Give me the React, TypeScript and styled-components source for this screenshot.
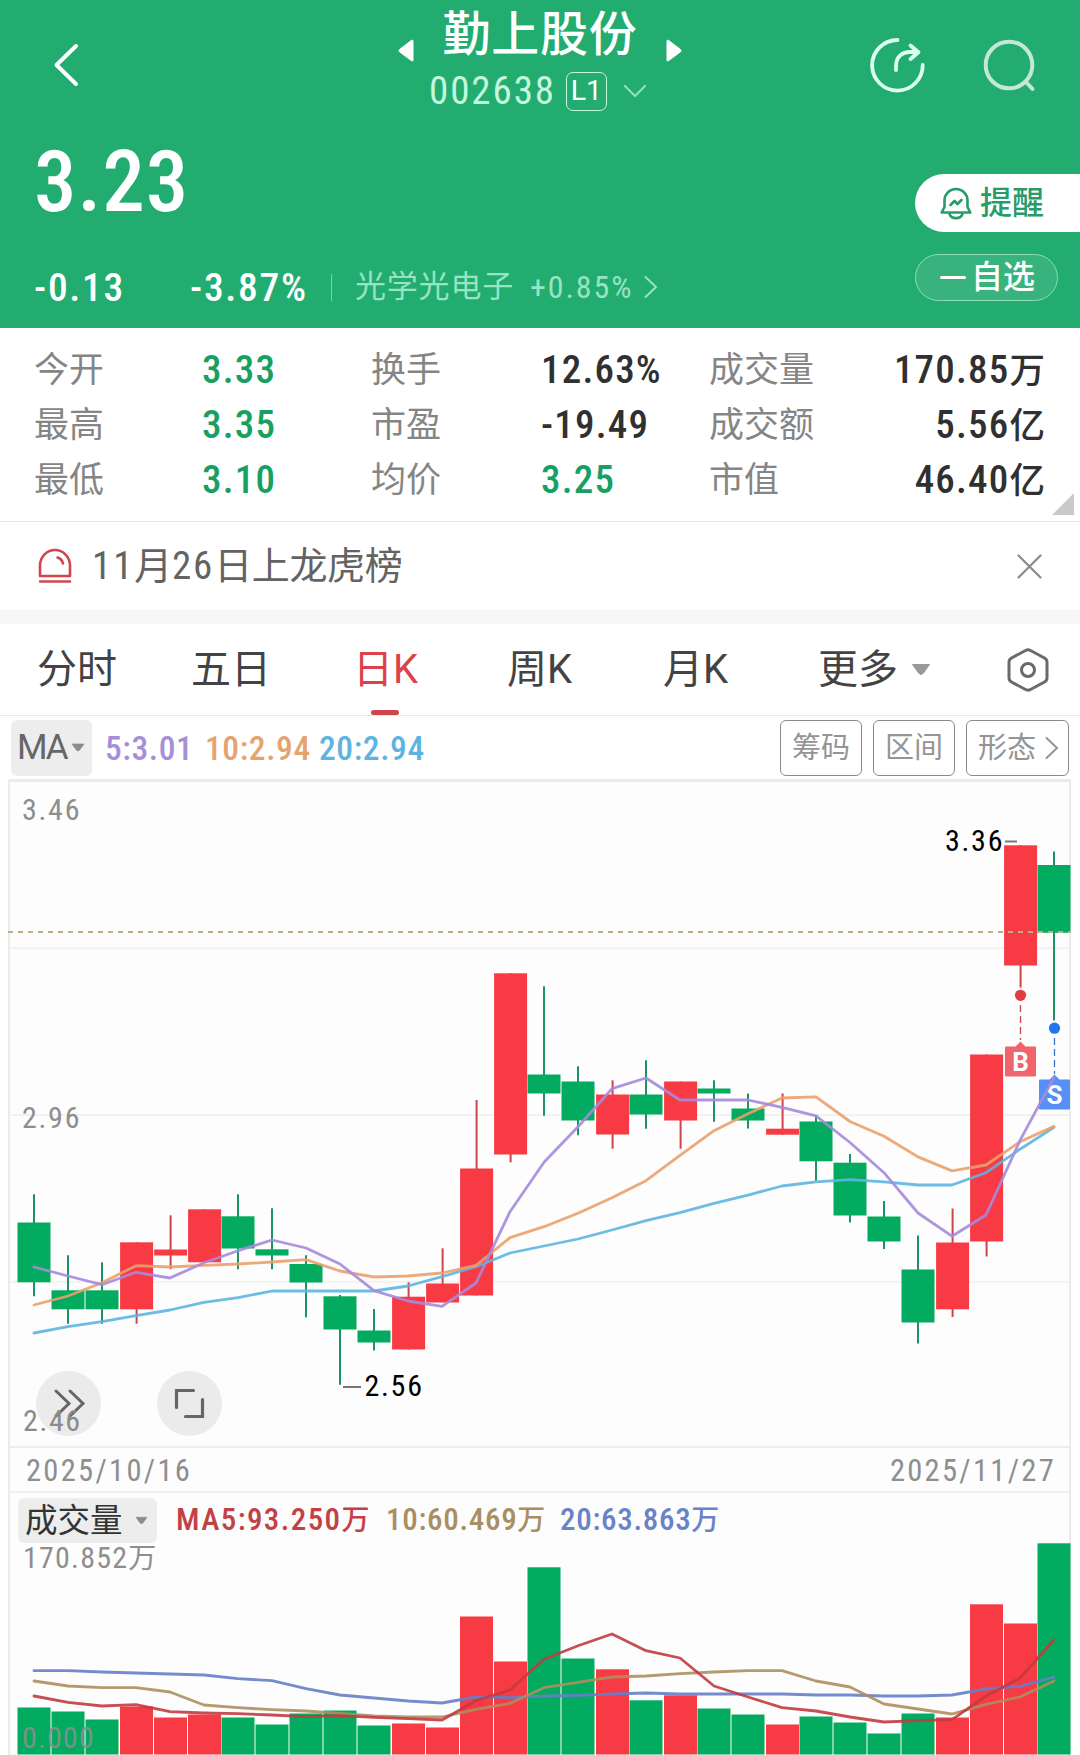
import React from 'react';
import styled, { createGlobalStyle } from 'styled-components';

const GlobalStyle = createGlobalStyle`
  * { box-sizing: border-box; }
  body {
    margin: 0;
    background: #fff;
    font-family: Roboto, "Noto Sans CJK SC", sans-serif;
  }
  svg { display: block; flex: none; overflow: visible; }
`;

const RED = '#f73a44';
const GREEN = '#02ab5f';

/* ---------- layout ---------- */

const Page = styled.main`
  width: 1080px;
  height: 1755px;
  overflow: hidden;
  background: #fff;
`;

const Header = styled.header`
  height: 328px;
  background: #22ac70;
  color: #fff;
`;

const TopBar = styled.div`
  display: grid;
  grid-template-columns: 1fr 284px 1fr;
  height: 130px;
`;

const BackSlot = styled.div`
  padding: 43px 0 0 53px;
`;

const TitleNav = styled.div`
  display: flex;
  justify-content: space-between;
`;

const StepArrow = styled.div`
  padding-top: 39px;
`;

const TitleStack = styled.div`
  display: flex;
  flex-direction: column;
  align-items: center;
`;

const Title = styled.h1`
  margin: 0;
  height: 68px;
  line-height: 70px;
  font-size: 48px;
  font-weight: 500;
  letter-spacing: 0.8px;
  white-space: nowrap;
`;

const CodeRow = styled.div`
  display: flex;
  align-items: center;
  height: 46px;
  margin-left: -5px;
`;

const Code = styled.span`
  font-size: 39px;
  font-stretch: 75%;
  letter-spacing: 1.9px;
  color: #c4f7de;
`;

const LevelBadge = styled.span`
  width: 41px;
  height: 39px;
  margin: 0 17px 0 10px;
  border: 1.5px solid #c4f7de;
  border-radius: 7px;
  font-size: 28.5px;
  line-height: 36px;
  text-align: center;
`;

const ActionIcons = styled.div`
  display: flex;
  justify-content: flex-end;
  gap: 58px;
  padding: 37px 45px 0 0;
`;

const QuoteArea = styled.div`
  display: flex;
  justify-content: space-between;
`;

const PriceColumn = styled.div`
  padding-left: 34px;
`;

const Price = styled.div`
  height: 103px;
  font-size: 85px;
  font-weight: 500;
  font-stretch: 75%;
  line-height: 105px;
  letter-spacing: 1px;
`;

const ChangeRow = styled.div`
  display: flex;
  align-items: center;
  height: 80px;
  margin-top: 14px;
`;

const Change = styled.span<{ $width: number }>`
  width: ${(p) => p.$width}px;
  font-size: 39.5px;
  font-weight: 500;
  font-stretch: 75%;
  letter-spacing: 1.7px;
  white-space: nowrap;
`;

const Divider = styled.span`
  width: 1px;
  height: 27px;
  background: #74d3a7;
`;

const Sector = styled.span`
  display: flex;
  align-items: center;
  margin-left: 23px;
  padding-bottom: 1px;
  font-size: 31px;
  line-height: 36px;
  letter-spacing: 0.8px;
  color: #98e3c1;
  white-space: nowrap;
`;

const SectorChange = styled.span`
  width: 105px;
  margin: 0 9px 0 16px;
  font-size: 32px;
  font-stretch: 75%;
  letter-spacing: 1.9px;
`;

const Pills = styled.div`
  display: flex;
  flex-direction: column;
  gap: 22px;
  width: 165px;
  padding-top: 44px;
`;

const AlertPill = styled.div`
  display: flex;
  align-items: center;
  gap: 8px;
  height: 58px;
  padding-left: 25px;
  border-radius: 29px 0 0 29px;
  background: #fff;
  color: #279b69;
  font-size: 32px;
  font-weight: 500;
  line-height: 52px;
`;

const WatchPill = styled.div`
  display: flex;
  align-items: center;
  gap: 5px;
  width: 143px;
  height: 47px;
  padding: 0 0 1px 24px;
  border: 1.5px solid #8fdcb9;
  border-radius: 24px;
  background: #38b37e;
  font-size: 32px;
  font-weight: 500;
  line-height: 40px;
`;

const MinusBar = styled.span`
  width: 26px;
  height: 3px;
  border-radius: 2px;
  background: #fff;
`;

const Stats = styled.section`
  display: grid;
  grid-template-columns: 168px 169px 170px 168px 1fr;
  grid-auto-rows: 55px;
  height: 194px;
  padding: 14px 35px 0 34px;
  border-bottom: 1px solid #e9e9e9;
  position: relative;
`;

const StatLabel = styled.span`
  font-size: 35px;
  line-height: 57px;
  color: #858585;
  white-space: nowrap;
`;

const StatValue = styled.span<{ $green?: boolean }>`
  font-size: 39px;
  line-height: 56px;
  font-weight: 500;
  font-stretch: 75%;
  letter-spacing: 1.2px;
  color: ${(p) => (p.$green ? '#18a062' : '#303030')};
  white-space: nowrap;
`;

const StatPair = styled.div`
  display: flex;
  justify-content: space-between;
`;

const Unit = styled.span`
  font-size: 35.5px;
  letter-spacing: 0;
`;

const ExpandCorner = styled.span`
  position: absolute;
  right: 6px;
  bottom: 6px;
  border-style: solid;
  border-width: 0 0 22px 22px;
  border-color: transparent transparent #c9c9c9 transparent;
`;

const Notice = styled.section`
  display: flex;
  align-items: center;
  height: 88px;
  padding: 0 38px;
`;

const NoticeText = styled.span`
  flex: 1;
  margin-left: 20px;
  font-size: 38px;
  line-height: 84px;
  letter-spacing: -0.4px;
  color: #636363;
`;

const NoticeNumber = styled.span`
  font-size: 39px;
  font-stretch: 75%;
  letter-spacing: 1.9px;
`;

const Band = styled.div`
  height: 14px;
  background: #f7f7f7;
`;

const Tabs = styled.nav`
  display: flex;
  height: 92px;
  padding-left: 37px;
  border-bottom: 1px solid #e9e9e9;
`;

const Tab = styled.div<{ $active?: boolean; $width: number }>`
  display: flex;
  align-items: center;
  position: relative;
  width: ${(p) => p.$width}px;
  height: 91px;
  padding-bottom: 7px;
  font-size: 40px;
  color: ${(p) => (p.$active ? '#dc424b' : '#434343')};
  white-space: nowrap;
  ${(p) =>
    p.$active &&
    `&::after {
      content: '';
      position: absolute;
      left: 18px;
      bottom: 0;
      width: 28px;
      height: 5px;
      border-radius: 3px;
      background: #d0444c;
    }`}
`;

const TabIcon = styled.span<{ $gap?: number }>`
  margin: 7px 0 0 ${(p) => p.$gap ?? 0}px;
`;

const MaBar = styled.section`
  display: flex;
  align-items: center;
  height: 63px;
  padding: 0 11px;
`;

const MaSelect = styled.div`
  display: flex;
  align-items: center;
  gap: 4px;
  width: 81px;
  height: 56px;
  margin-right: 13px;
  padding-left: 6px;
  border-radius: 6px;
  background: #ededed;
  font-size: 35px;
  letter-spacing: -2px;
  color: #666;
`;

const MaValue = styled.span<{ $color: string; $width: number }>`
  width: ${(p) => p.$width}px;
  padding-top: 1px;
  font-size: 33.5px;
  font-weight: 500;
  font-stretch: 75%;
  letter-spacing: 0.6px;
  color: ${(p) => p.$color};
  white-space: nowrap;
`;

const ChipGroup = styled.div`
  display: flex;
  gap: 11px;
  margin-left: auto;
`;

const Chip = styled.div<{ $width: number }>`
  display: flex;
  align-items: center;
  gap: 9px;
  width: ${(p) => p.$width}px;
  height: 56px;
  padding-left: 11px;
  border: 1px solid #8a8a8a;
  border-radius: 6px;
  font-size: 29px;
  line-height: 52px;
  color: #949494;
  white-space: nowrap;
`;

const ChartFrame = styled.section`
  position: relative;
  margin: 0 9px 0 8px;
  border: solid #ebebeb;
  border-width: 3px 2px 0;
  background: #fdfdfd;
`;

const RoundButton = styled.div<{ $left: number }>`
  position: absolute;
  left: ${(p) => p.$left}px;
  top: 589px;
  width: 65px;
  height: 65px;
  border-radius: 50%;
  background: #ebebeb;
`;

const FloorLabel = styled.span`
  position: absolute;
  left: 13px;
  top: 621px;
  font-size: 30px;
  font-stretch: 75%;
  line-height: 36px;
  letter-spacing: 1.6px;
  color: #8b8b8b;
`;

const DateRow = styled.div`
  display: flex;
  justify-content: space-between;
  height: 45px;
  padding: 0 13px 0 16px;
  border-top: 2px solid #ededed;
  font-size: 30.5px;
  font-stretch: 75%;
  line-height: 46px;
  letter-spacing: 2.3px;
  color: #8e8e8e;
`;

const VolumeBar = styled.div`
  display: flex;
  align-items: center;
  height: 52px;
  padding: 5px 0 0 8px;
  border-top: 2px solid #f1f1f1;
`;

const VolumeSelect = styled.div`
  display: flex;
  align-items: center;
  gap: 12px;
  width: 139px;
  height: 45px;
  margin-right: 19px;
  padding-left: 7px;
  border-radius: 6px;
  background: #ededed;
  font-size: 32.5px;
  line-height: 42px;
  color: #333;
`;

const VolumeValue = styled.span<{ $color: string; $width: number; $spacing: number }>`
  width: ${(p) => p.$width}px;
  font-size: 31px;
  font-weight: 500;
  font-stretch: 75%;
  line-height: 46px;
  letter-spacing: ${(p) => p.$spacing}px;
  color: ${(p) => p.$color};
  white-space: nowrap;
`;

const VolumeUnit = styled.span`
  font-size: 28px;
  letter-spacing: 0;
`;

const AxisText = styled.text<{ $spacing?: number }>`
  font-family: Roboto, "Noto Sans CJK SC", sans-serif;
  font-size: 30px;
  font-stretch: 75%;
  letter-spacing: ${(p) => p.$spacing ?? 1.7}px;
  fill: #8e8e8e;
`;

const PeakText = styled(AxisText)`
  fill: #000;
`;

/* ---------- data: pixel levels on the chart canvas ---------- */

type Candle = [up: 0 | 1, top: number, bottom: number, high: number, low: number];

const candles: Candle[] = [
  [0, 1222.5, 1282.3, 1194.3, 1296.3],
  [0, 1290.3, 1309.3, 1255.3, 1323.7],
  [0, 1290.3, 1309.3, 1262.3, 1323.7],
  [1, 1242.3, 1309.3, 1242.3, 1323.7],
  [1, 1249.5, 1255.5, 1215.3, 1269.3],
  [1, 1209.3, 1262.3, 1209.3, 1262.3],
  [0, 1216.3, 1248.5, 1194.3, 1269.3],
  [0, 1249.3, 1255.5, 1208.3, 1269.3],
  [0, 1264, 1282.5, 1255.3, 1317.3],
  [0, 1296.3, 1329.5, 1295, 1384.7],
  [0, 1330.5, 1342.5, 1309, 1350.5],
  [1, 1296.7, 1349.5, 1282.3, 1349.5],
  [1, 1283.5, 1302.5, 1248.3, 1302.5],
  [1, 1168.5, 1295.5, 1100, 1295.5],
  [1, 973.3, 1154.5, 973.3, 1162.3],
  [0, 1074.5, 1093.5, 986.3, 1115.7],
  [0, 1081.5, 1120.5, 1066.3, 1135.3],
  [1, 1094.5, 1134.5, 1080.3, 1148.7],
  [0, 1094.5, 1114.5, 1060.3, 1128.7],
  [1, 1081.5, 1120.5, 1081.5, 1148.7],
  [0, 1088.5, 1093.5, 1080.3, 1121.7],
  [0, 1108.5, 1120.5, 1093.4, 1128.5],
  [1, 1128.7, 1134.7, 1093.4, 1134.7],
  [0, 1121.5, 1161.3, 1115, 1180.7],
  [0, 1162.7, 1215.5, 1154, 1222.5],
  [0, 1216.5, 1241.5, 1201, 1249],
  [0, 1269.5, 1322.5, 1235.5, 1343.5],
  [1, 1242.5, 1309.3, 1208.5, 1317],
  [1, 1054.5, 1241.5, 1054.5, 1256.5],
  [1, 845.3, 965.5, 845.3, 987.5],
  [0, 865, 932.8, 851.4, 1020.5],
];

const ma5 = [1267, 1276, 1284.7, 1272.3, 1278, 1262.7, 1250.7, 1240, 1248, 1264, 1290.7, 1301, 1306.3, 1283, 1211.7, 1162.3, 1126.7, 1088.7, 1078, 1100, 1100, 1100, 1107.4, 1115.9, 1142.5, 1172.7, 1213, 1236.2, 1215, 1140.4, 1077.3];
const ma10 = [1305, 1296, 1282.7, 1265.7, 1267, 1265.3, 1264, 1262, 1259.7, 1271, 1277, 1276, 1273, 1265.3, 1237.7, 1226.7, 1213.3, 1197.7, 1180.7, 1155.3, 1130.7, 1113.8, 1098, 1096.9, 1121.5, 1136.2, 1156.9, 1170.9, 1165, 1141.8, 1126.4];
const ma20 = [1333, 1326.7, 1321.7, 1315.7, 1310, 1302.3, 1297.7, 1291, 1291, 1291, 1291, 1286, 1276.7, 1266.7, 1253, 1246, 1239, 1230, 1220.7, 1212.7, 1203.3, 1195.1, 1186, 1181.8, 1179.7, 1181.8, 1185, 1185, 1172.7, 1149.2, 1127.4];

const volumeTops = [1707.5, 1711.5, 1719.5, 1706.5, 1717.5, 1714.5, 1717.5, 1724.5, 1713.5, 1710.5, 1725.5, 1723.5, 1727.5, 1616.5, 1661.5, 1567.3, 1658.5, 1669.3, 1700.3, 1695.3, 1708.5, 1714.5, 1724.5, 1716.5, 1722.5, 1733.5, 1713.5, 1717.5, 1604.3, 1623.5, 1543.3];
const vma5 = [1696, 1702.3, 1706, 1704.7, 1711.7, 1713, 1713.7, 1715, 1716.7, 1715.7, 1717.3, 1718.7, 1720, 1700.7, 1690, 1659.3, 1645.7, 1634, 1650.7, 1658, 1686, 1697, 1707.7, 1711, 1717, 1722, 1720.7, 1719.7, 1696, 1678, 1640];
const vma10 = [1681, 1686, 1687.7, 1687.7, 1692, 1705, 1707.7, 1709.7, 1711, 1713.3, 1716, 1717, 1717, 1709.3, 1703.3, 1687.7, 1682.3, 1677, 1676, 1673.7, 1672, 1670.7, 1670.7, 1681, 1687, 1704, 1709, 1714, 1704.3, 1697, 1681];
const vma20 = [1670.7, 1670.7, 1672, 1673, 1674, 1675, 1678.7, 1680.7, 1688.7, 1695, 1698, 1701, 1703, 1697, 1697.7, 1696, 1695.3, 1694, 1693, 1694, 1694, 1694, 1694, 1695, 1695, 1696, 1696, 1695, 1689, 1686.3, 1677];

const centerX = (i: number) => 34 + i * 34;
const toPoints = (levels: number[]) => levels.map((y, i) => `${centerX(i)},${y}`).join(' ');

const Line = ({ levels, color }: { levels: number[]; color: string }) => (
  <polyline points={toPoints(levels)} fill="none" stroke={color} strokeWidth={2.8} strokeOpacity={0.9} strokeLinejoin="round" strokeLinecap="round" />
);

const Caret = ({ width = 13, height = 8, color = '#8c8c8c' }) => (
  <svg width={width} height={height} viewBox="0 0 20 12">
    <path d="M1.5 1h17L12.5 9.5q-2.5 3-5 0z" fill={color} stroke={color} strokeLinejoin="round" />
  </svg>
);

const Chevron = ({ color, width = 13, height = 22 }: { color: string; width?: number; height?: number }) => (
  <svg width={width} height={height} viewBox="0 0 13 22" fill="none" stroke={color} strokeWidth={2} strokeLinecap="round">
    <path d="M1.5 1 12 11 1.5 21" />
  </svg>
);

const PriceChart = () => (
  <svg width={1059} height={664} viewBox="10 782 1059 664">
    {[948.2, 1115, 1281.8].map((y) => (
      <path key={y} d={`M10 ${y}H1069`} stroke="#f2f2f2" strokeWidth={2} />
    ))}
    {candles.map(([up, top, bottom, high, low], i) => {
      const x = centerX(i) + (up ? 0.6 : 0);
      return (
        <g key={i}>
          <path d={`M${x} ${high}V${low}`} stroke={up ? '#d0434b' : '#1b9460'} strokeWidth={2} />
          <rect x={x - 16.5} y={top} width={33} height={bottom - top} fill={up ? RED : GREEN} />
        </g>
      );
    })}
    <path d="M8 932H1070" stroke="#bfae86" strokeWidth={1.8} strokeDasharray="5 5" />
    <g strokeWidth={1.3} strokeDasharray="7 4">
      <path d="M1020.5 1005V1040" stroke="#c9454d" />
      <path d="M1054.5 1038V1074" stroke="#3a76c8" />
    </g>
    <circle cx={1020.5} cy={995.3} r={5.6} fill="#e33b43" />
    <circle cx={1054.5} cy={1028.2} r={5.6} fill="#2673ee" />
    <path d="M1006 1046.500h9.500l5-5 5 5h9.500a1 1 0 0 1 1 1v28a1 1 0 0 1-1 1h-29a1 1 0 0 1-1-1v-28a1 1 0 0 1 1-1z" fill="#f0656d" />
    <path d="M1040 1079.500h9.500l5-5 5 5h9.500a1 1 0 0 1 1 1v28a1 1 0 0 1-1 1h-29a1 1 0 0 1-1-1v-28a1 1 0 0 1 1-1z" fill="#568ff6" />
    <g fontFamily="Roboto, sans-serif" fontSize={26} fontWeight={700} fill="#fff" textAnchor="middle">
      <text x={1020.5} y={1071}>B</text>
      <text x={1054.5} y={1104}>S</text>
    </g>
    <Line levels={ma20} color="#5cb5e0" />
    <Line levels={ma10} color="#eba06a" />
    <Line levels={ma5} color="#a58bdc" />
    <AxisText x={22} y={820}>3.46</AxisText>
    <AxisText x={22} y={1128}>2.96</AxisText>
    <PeakText x={945} y={851}>3.36</PeakText>
    <PeakText x={364.500} y={1396}>2.56</PeakText>
    <path d="M1005 841.500h12M343 1387h18" stroke="#777" strokeWidth={2} />
  </svg>
);

const VolumeChart = () => (
  <svg width={1059} height={212} viewBox="10 1543 1059 212">
    {volumeTops.map((top, i) => (
      <rect key={i} x={centerX(i) - 16.5 + (candles[i][0] ? 0.5 : 0)} y={top} width={33} height={1754.5 - top} fill={candles[i][0] ? RED : GREEN} />
    ))}
    <Line levels={vma20} color="#6580c8" />
    <Line levels={vma10} color="#ad8f60" />
    <Line levels={vma5} color="#c23b3f" />
    <AxisText x={23} y={1568} $spacing={1.2}>
      170.852<tspan fontSize={28}>万</tspan>
    </AxisText>
    <AxisText x={22} y={1748} $spacing={1.1} fillOpacity={0.9}>0.000</AxisText>
  </svg>
);

const statRows = [
  { a: ['今开', '3.33'], b: ['换手', '12.63%'], c: ['成交量', '170.85', '万'] },
  { a: ['最高', '3.35'], b: ['市盈', '-19.49'], c: ['成交额', '5.56', '亿'] },
  { a: ['最低', '3.10'], b: ['均价', '3.25'], c: ['市值', '46.40', '亿'] },
];

export default function App() {
  return (
    <Page>
      <GlobalStyle />
      <Header>
        <TopBar>
          <BackSlot>
            <svg width={26} height={44} viewBox="0 0 26 44" fill="none" stroke="#fff" strokeWidth={4} strokeLinecap="round" strokeLinejoin="round">
              <path d="M23 3 3.500 22 23 41" />
            </svg>
          </BackSlot>
          <TitleNav>
            <StepArrow>
              <svg width={16} height={23} viewBox="0 0 16 23">
                <path d="M1.500 10.500 14 1l1 .6v20l-1 .4L1.500 12.800q-1.300-1.200 0-2.300z" fill="#fff" stroke="#fff" strokeLinejoin="round" />
              </svg>
            </StepArrow>
            <TitleStack>
              <Title>勤上股份</Title>
              <CodeRow>
                <Code>002638</Code>
                <LevelBadge>L1</LevelBadge>
                <svg width={22} height={12} viewBox="0 0 22 12" fill="none" stroke="#8fe0bb" strokeWidth={2.2} strokeLinecap="round">
                  <path d="M1 1 11 11 21 1" />
                </svg>
              </CodeRow>
            </TitleStack>
            <StepArrow>
              <svg width={16} height={23} viewBox="0 0 16 23">
                <path d="M14.500 10.500 2 1l-1 .6v20l1 .4 12.500-9.200q1.300-1.200 0-2.300z" fill="#fff" stroke="#fff" strokeLinejoin="round" />
              </svg>
            </StepArrow>
          </TitleNav>
          <ActionIcons>
            <svg width={56} height={56} viewBox="0 0 56 56" fill="none" stroke="#dcfff0" strokeWidth={3.8} strokeLinecap="round" strokeLinejoin="round">
              <path d="M28.500 3A25.300 25.300 0 1 0 53.700 28" />
              <path d="M27 33v-4c0-9 6-14 14-14h7M41.500 8.500 49.500 15.200 41.500 22" />
            </svg>
            <svg width={52} height={56} viewBox="0 0 52 56" fill="none" stroke="#c3e8d5" strokeWidth={4} strokeLinecap="round">
              <circle cx={26} cy={28} r={23.300} />
              <path d="m43.500 45.500 6 6.500" />
            </svg>
          </ActionIcons>
        </TopBar>
        <QuoteArea>
          <PriceColumn>
            <Price>3.23</Price>
            <ChangeRow>
              <Change $width={156}>-0.13</Change>
              <Change $width={141}>-3.87%</Change>
              <Divider />
              <Sector>
                光学光电子
                <SectorChange>+0.85%</SectorChange>
                <Chevron color="#98e3c1" />
              </Sector>
            </ChangeRow>
          </PriceColumn>
          <Pills>
            <AlertPill>
              <svg width={32} height={33} viewBox="0 0 32 33" fill="none" stroke="#279b69" strokeWidth={2.6} strokeLinecap="round" strokeLinejoin="round">
                <path d="M4.500 20V13.500a11.500 11.500 0 0 1 23 0V20l2.800 5.500H1.700z" />
                <path d="M9.500 27c2 5.500 11 5.500 13 0" />
                <path d="m10.500 18 4-4 3 3 4-4" />
              </svg>
              提醒
            </AlertPill>
            <WatchPill>
              <MinusBar />
              自选
            </WatchPill>
          </Pills>
        </QuoteArea>
      </Header>

      <Stats>
        {statRows.map(({ a, b, c }) => (
          <React.Fragment key={a[0]}>
            <StatLabel>{a[0]}</StatLabel>
            <StatValue $green>{a[1]}</StatValue>
            <StatLabel>{b[0]}</StatLabel>
            <StatValue $green={b[0] === '均价'}>{b[1]}</StatValue>
            <StatPair>
              <StatLabel>{c[0]}</StatLabel>
              <StatValue>
                {c[1]}
                <Unit>{c[2]}</Unit>
              </StatValue>
            </StatPair>
          </React.Fragment>
        ))}
        <ExpandCorner />
      </Stats>

      <Notice>
        <svg width={34} height={36} viewBox="0 0 34 36" fill="none" stroke="#d0454d" strokeWidth={2.6} strokeLinecap="round" strokeLinejoin="round">
          <path d="M2 28V17.500a15 15.500 0 0 1 30 0V28zM2 33.500h30" />
          <path d="M19.500 9.500q4.500 1.500 5.500 6" />
        </svg>
        <NoticeText>
          <NoticeNumber>11</NoticeNumber>月<NoticeNumber>26</NoticeNumber>日上龙虎榜
        </NoticeText>
        <svg width={25} height={25} viewBox="0 0 25 25" stroke="#8c8c8c" strokeWidth={2.3} strokeLinecap="round">
          <path d="M1.500 1.500l22 22M23.500 1.500l-22 22" />
        </svg>
      </Notice>
      <Band />

      <Tabs>
        <Tab $width={154}>分时</Tab>
        <Tab $width={162}>五日</Tab>
        <Tab $width={154} $active>日K</Tab>
        <Tab $width={156}>周K</Tab>
        <Tab $width={155}>月K</Tab>
        <Tab $width={189}>
          更多
          <TabIcon $gap={13}>
            <Caret width={20} height={13} color="#999" />
          </TabIcon>
        </Tab>
        <Tab $width={42}>
          <TabIcon>
            <svg width={42} height={44} viewBox="0 0 42 44" fill="none" stroke="#6a6a6a" strokeWidth={3}>
              <path d="M18.500 2.500q2.500-1.300 5 0L37.500 10q2.500 1.500 2.500 4v16q0 2.500-2.500 4l-14 7.500q-2.500 1.300-5 0L4.500 34Q2 32.500 2 30V14q0-2.500 2.500-4z" />
              <circle cx={21} cy={22} r={6.500} />
            </svg>
          </TabIcon>
        </Tab>
      </Tabs>

      <MaBar>
        <MaSelect>
          MA
          <Caret width={14} height={9} />
        </MaSelect>
        <MaValue $color="#a58fd8" $width={100}>5:3.01</MaValue>
        <MaValue $color="#e5a36f" $width={114}>10:2.94</MaValue>
        <MaValue $color="#5fb3df" $width={110}>20:2.94</MaValue>
        <ChipGroup>
          <Chip $width={82}>筹码</Chip>
          <Chip $width={82}>区间</Chip>
          <Chip $width={103}>
            形态
            <Chevron color="#949494" />
          </Chip>
        </ChipGroup>
      </MaBar>

      <ChartFrame>
        <PriceChart />
        <RoundButton $left={26}>
          <svg width={65} height={65} viewBox="0 0 65 65" fill="none" stroke="#666" strokeWidth={3} strokeLinecap="round">
            <path d="M20 20 33 32.500 20 45M34 20 47 32.500 34 45" />
          </svg>
        </RoundButton>
        <RoundButton $left={147}>
          <svg width={65} height={65} viewBox="0 0 65 65" fill="none" stroke="#666" strokeWidth={3.2} strokeLinecap="round">
            <path d="M36.500 19.500H19.500V36.500M28.500 45.500H45.500V28.500" />
          </svg>
        </RoundButton>
        <FloorLabel>2.46</FloorLabel>
        <DateRow>
          <span>2025/10/16</span>
          <span>2025/11/27</span>
        </DateRow>
        <VolumeBar>
          <VolumeSelect>
            成交量
            <Caret width={13} height={9} />
          </VolumeSelect>
          <VolumeValue $color="#c24146" $width={210} $spacing={1.4}>
            MA5:93.250<VolumeUnit>万</VolumeUnit>
          </VolumeValue>
          <VolumeValue $color="#a98e62" $width={174} $spacing={0.7}>
            10:60.469<VolumeUnit>万</VolumeUnit>
          </VolumeValue>
          <VolumeValue $color="#6a82c6" $width={170} $spacing={0.7}>
            20:63.863<VolumeUnit>万</VolumeUnit>
          </VolumeValue>
        </VolumeBar>
        <VolumeChart />
      </ChartFrame>
    </Page>
  );
}
